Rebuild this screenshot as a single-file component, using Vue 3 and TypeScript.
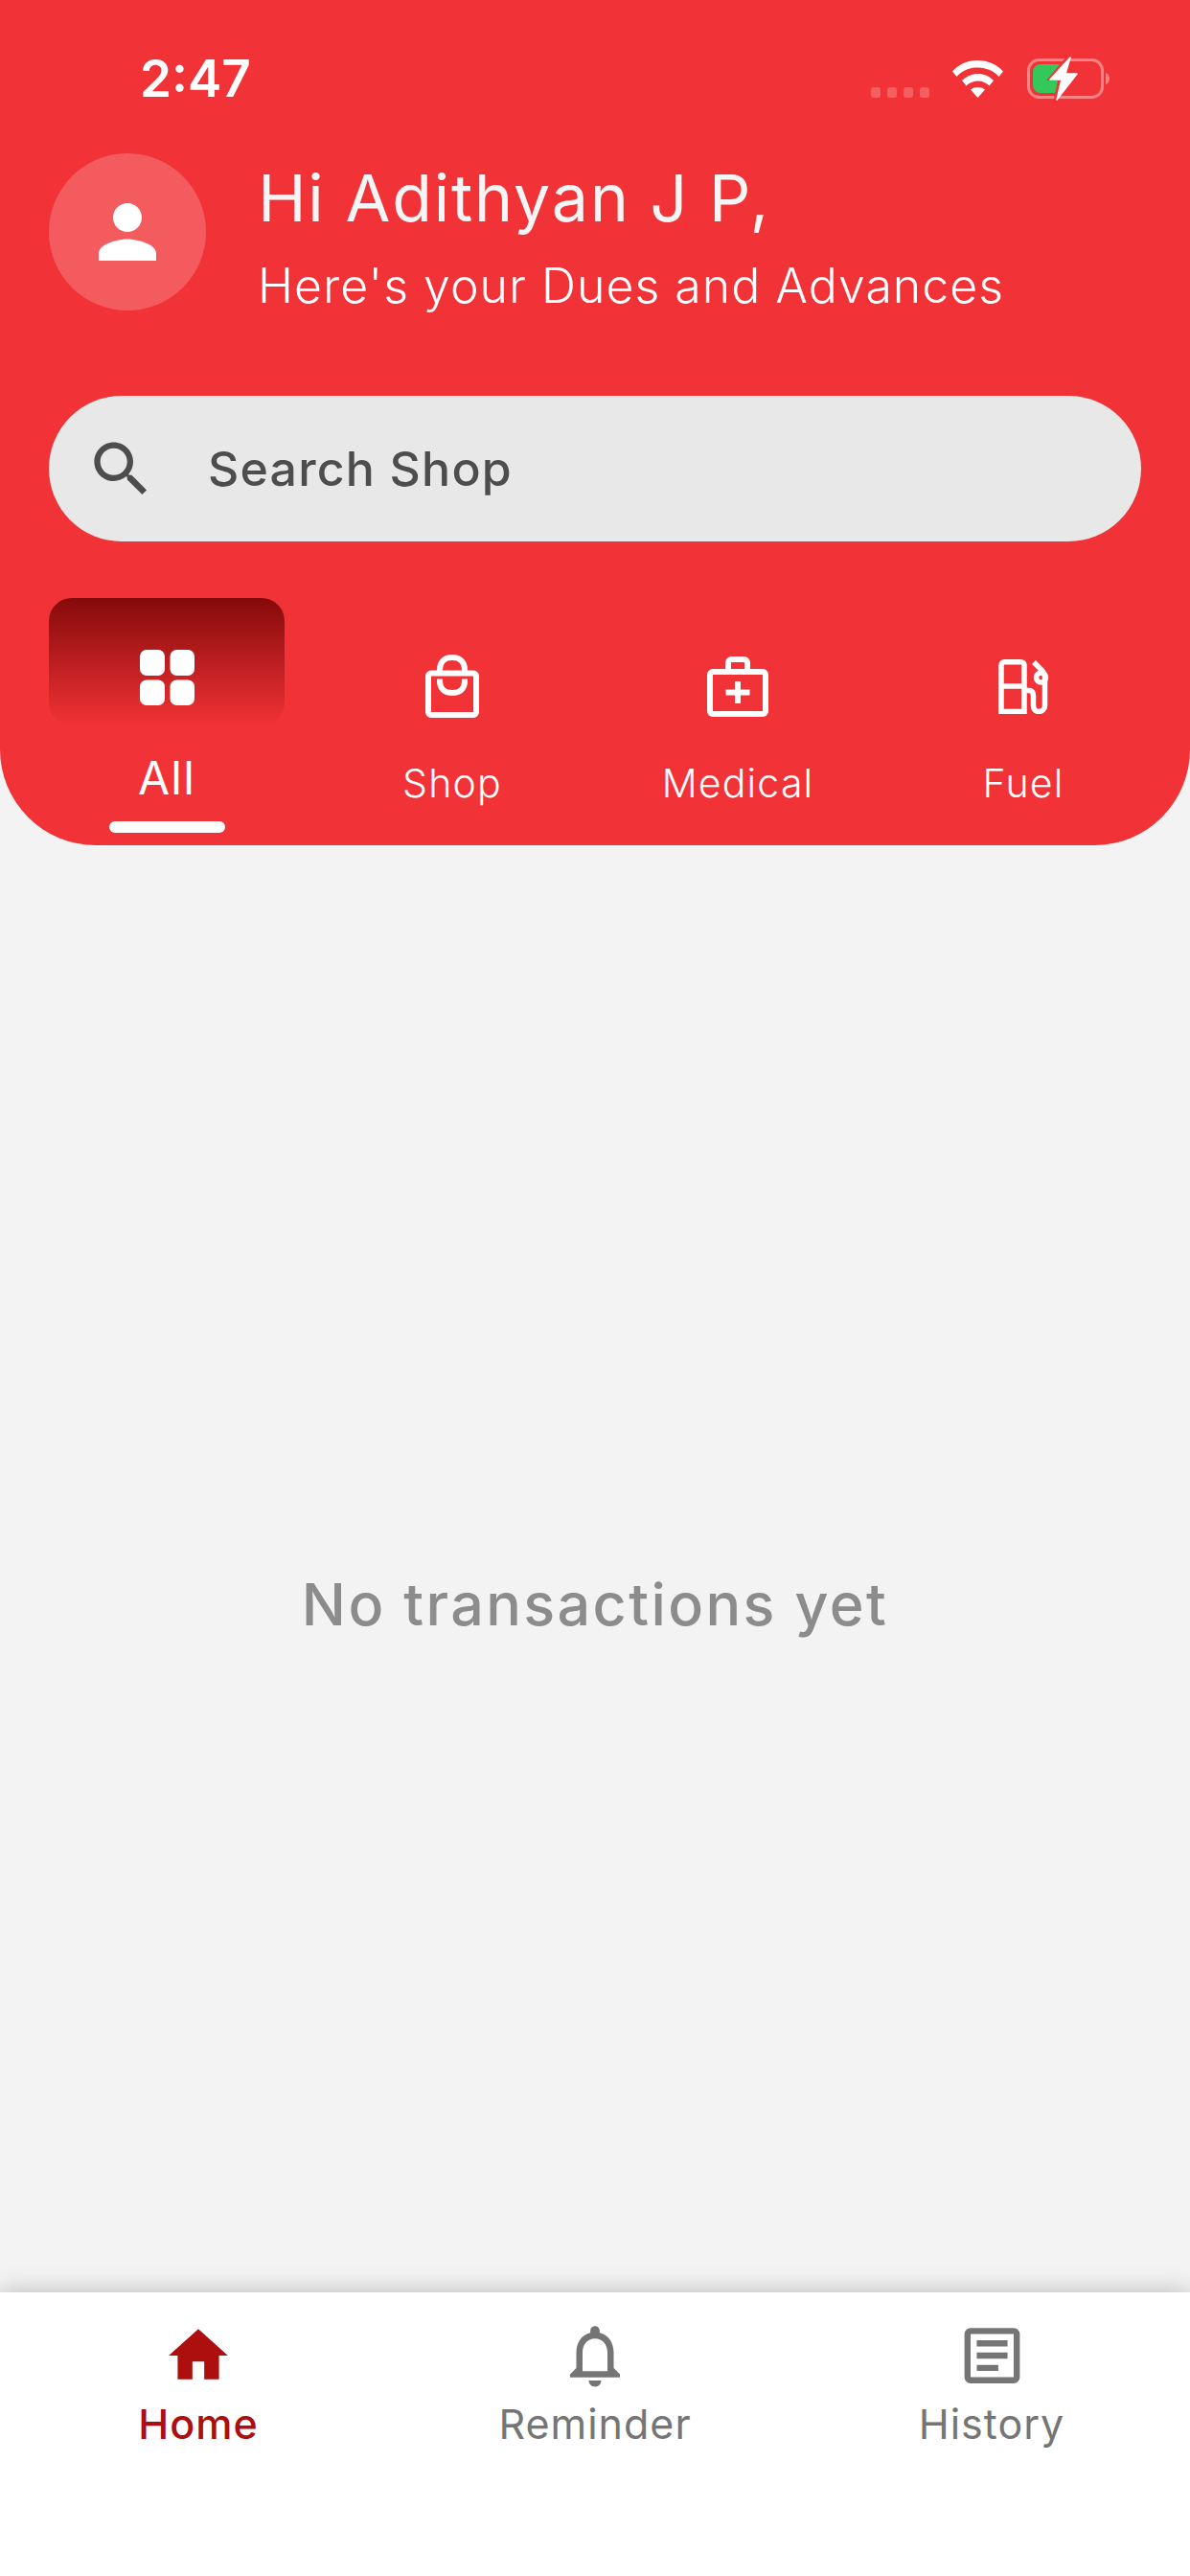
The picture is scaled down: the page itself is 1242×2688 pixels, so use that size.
<template>
  <div class="screen">
    <header class="top">
      <div class="status">
        <span class="time">2:47</span>
        <div class="status-icons">
          <div class="signal"><i /><i /><i /><i /></div>
          <svg class="wifi" viewBox="0 0 53 40">
            <path d="M0 12.5C7 5 16 1 26.500 1S46 5 53 12.500L48.500 18C43 12 35.500 8.500 26.500 8.500S10 12 4.500 18Z" fill="#fff" />
            <path d="M10 22C14.500 17.500 20 15 26.500 15S38.500 17.500 43 22L38.500 27.500C35.500 24.500 31.500 22.500 26.500 22.500S17.500 24.500 14.500 27.500Z" fill="#fff" />
            <path d="M19 31.500C21 29.800 23.500 29 26.500 29S32 29.800 34 31.500L26.500 40Z" fill="#fff" />
          </svg>
          <svg class="battery" viewBox="0 0 90 46">
            <rect x="1.500" y="3.500" width="77" height="39" rx="11" fill="none" stroke="#fff" stroke-opacity=".4" stroke-width="3" />
            <path d="M82 17c2.500.8 4 3 4 6s-1.500 5.200-4 6Z" fill="#fff" fill-opacity=".4" />
            <rect x="6" y="8" width="34" height="30" rx="8" fill="#34c759" />
            <path d="M42-1 20 25h12l-5 24 25-31H39l7-19Z" fill="#f13236" />
            <path d="M45 1 24 24h12l-5 21 21-27H40Z" fill="#fff" stroke="#fff" stroke-width="1.500" stroke-linejoin="round" />
          </svg>
        </div>
      </div>

      <div class="hello">
        <div class="avatar">
          <svg viewBox="0 0 24 24" width="90" height="90">
            <path d="M12 12c2.210 0 4-1.790 4-4s-1.790-4-4-4-4 1.790-4 4 1.790 4 4 4zm0 2c-2.670 0-8 1.340-8 4v2h16v-2c0-2.660-5.330-4-8-4z" fill="#fff" />
          </svg>
        </div>
        <div class="hello-text">
          <h1>Hi Adithyan J P,</h1>
          <p>Here's your Dues and Advances</p>
        </div>
      </div>

      <div class="search">
        <svg viewBox="0 0 24 24" width="75" height="75">
          <path d="M15.500 14h-.79l-.28-.27C15.410 12.590 16 11.110 16 9.500 16 5.910 13.090 3 9.500 3S3 5.910 3 9.500 5.910 16 9.500 16c1.610 0 3.090-.59 4.230-1.570l.27.280v.79l5 4.990L20.490 19l-4.990-5zm-6 0C7.010 14 5 11.990 5 9.500S7.010 5 9.500 5 14 7.010 14 9.500 11.990 14 9.500 14z" fill="#4d4d4d" />
        </svg>
        <span>Search Shop</span>
      </div>

      <nav class="cats">
        <div class="cat cat-active">
          <div class="tile">
            <svg viewBox="0 0 57 58" width="57" height="58" fill="#fff">
              <rect width="26" height="27" rx="7" />
              <rect x="31.500" width="25.500" height="27" rx="7" />
              <rect y="31.500" width="26" height="26.500" rx="7" />
              <rect x="31.500" y="31.500" width="25.500" height="26.500" rx="7" />
            </svg>
          </div>
          <span class="cat-label">All</span>
          <div class="bar" />
        </div>

        <div class="cat">
          <div class="cat-icon">
            <svg viewBox="0 0 56 66" width="56" height="66" fill="none" stroke="#fff" stroke-width="6">
              <rect x="3" y="19.500" width="50" height="43.500" rx="3" stroke-linejoin="round" />
              <path d="M15 19V15.500C15 7.500 20.500 3 28 3S41 7.500 41 15.500V19" />
              <path d="M15 25.500V28C15 36 20.500 40 28 40S41 36 41 28V25.500" />
            </svg>
          </div>
          <span class="cat-label cat-small">Shop</span>
        </div>

        <div class="cat">
          <div class="cat-icon">
            <svg viewBox="0 0 64 63" width="64" height="63" fill="none" stroke="#fff" stroke-width="6">
              <rect x="3" y="16" width="58" height="44" rx="3" />
              <path d="M22 15V6.500C22 4.500 23.500 3 25.500 3H38.500C40.500 3 42 4.500 42 6.500V15" />
              <path d="M32 26V49M19.500 37.500H44.500" />
            </svg>
          </div>
          <span class="cat-label cat-small">Medical</span>
        </div>

        <div class="cat">
          <div class="cat-icon">
            <svg viewBox="0 0 53 57" width="53" height="57" fill="none" stroke="#fff" stroke-width="5.500">
              <path d="M3 54.500V6C3 4 4.500 2.800 6.500 2.800H23.500C25.500 2.800 27 4 27 6V54.500Z" />
              <path d="M3 28H27" />
              <path d="M27 32.500H32C35 32.500 36.500 34.500 36.500 37.500V48C36.500 52 38.500 54.500 42 54.500S48.500 52 48.500 48V18C48.500 15 47.500 14 45.500 11.500L37 3" />
              <circle cx="44.500" cy="19" r="5" />
            </svg>
          </div>
          <span class="cat-label cat-small">Fuel</span>
        </div>
      </nav>
    </header>

    <main class="empty">
      <p>No transactions yet</p>
    </main>

    <footer class="tabs">
      <div class="tab tab-active">
        <svg viewBox="0 0 24 24" width="74" height="74">
          <path d="M10 20v-6h4v6h5v-8h3L12 3 2 12h3v8z" fill="currentColor" />
        </svg>
        <span>Home</span>
      </div>
      <div class="tab">
        <svg viewBox="0 0 24 24" width="78" height="78">
          <path d="M12 22c1.100 0 2-.9 2-2h-4c0 1.100.9 2 2 2zm6-6v-5c0-3.070-1.630-5.640-4.500-6.320V4c0-.83-.67-1.500-1.500-1.500s-1.500.67-1.500 1.500v.68C7.640 5.360 6 7.920 6 11v5l-2 2v1h16v-1l-2-2zm-2 1H8v-6c0-2.480 1.510-4.500 4-4.500s4 2.020 4 4.500v6z" fill="currentColor" />
        </svg>
        <span>Reminder</span>
      </div>
      <div class="tab">
        <svg viewBox="0 0 24 24" width="77" height="77">
          <path d="M19 5v14H5V5h14m0-2H5c-1.100 0-2 .9-2 2v14c0 1.100.9 2 2 2h14c1.100 0 2-.9 2-2V5c0-1.100-.9-2-2-2zM14 17H7v-2h7v2zm3-4H7v-2h10v2zm0-4H7V7h10v2z" fill="currentColor" />
        </svg>
        <span>History</span>
      </div>
    </footer>
  </div>
</template>

<script setup lang="ts">
</script>

<style>
html,
body {
  margin: 0;
  background: #f3f3f3;
}
</style>

<style scoped>
.screen {
  width: 1242px;
  height: 2688px;
  display: flex;
  flex-direction: column;
  overflow: hidden;
  background: #f3f3f3;
  font-family: Inter, Roboto, sans-serif;
}

.top {
  height: 882px;
  box-sizing: border-box;
  flex: none;
  background: #f13236;
  border-radius: 0 0 100px 100px;
  color: #fff;
}

.status {
  height: 160px;
  box-sizing: border-box;
  padding: 50px 80px 0 146px;
  display: flex;
  justify-content: space-between;
  align-items: flex-start;
}

.time {
  font-size: 53px;
  font-weight: 600;
  line-height: 64px;
}

.status-icons {
  display: flex;
  align-items: flex-start;
  padding-top: 10px;
}

.signal {
  display: flex;
  gap: 7px;
  margin-top: 31px;
  margin-right: 24px;
}

.signal i {
  width: 10px;
  height: 11px;
  border-radius: 3px;
  background: rgba(255, 255, 255, 0.22);
}

.wifi {
  width: 53px;
  height: 40px;
  margin-top: 2px;
  margin-right: 25px;
}

.battery {
  width: 90px;
  height: 46px;
  margin-top: -1px;
  overflow: visible;
}

.hello {
  display: flex;
  align-items: flex-start;
  padding-left: 51px;
  gap: 54px;
}

.avatar {
  width: 164px;
  height: 164px;
  border-radius: 50%;
  background: rgba(255, 255, 255, 0.2);
  display: flex;
  align-items: center;
  justify-content: center;
}

.hello-text h1 {
  margin: 6px 0 0;
  font-size: 68px;
  font-weight: 400;
  line-height: 80px;
  letter-spacing: 1.800px;
  color: #f5f5f5;
}

.hello-text p {
  margin: 22px 0 0;
  font-size: 50px;
  font-weight: 300;
  line-height: 60px;
  letter-spacing: 1px;
  color: #fff;
}

.search {
  margin: 85px 51px 0;
  height: 152px;
  border-radius: 76px;
  background: #e8e8e8;
  display: flex;
  align-items: center;
  padding-left: 38px;
  gap: 53px;
  color: #4d4d4d;
  font-size: 50px;
  font-weight: 450;
  letter-spacing: 1.200px;
}

.cats {
  display: grid;
  grid-template-columns: repeat(4, 1fr);
  padding: 0 25px;
  margin-top: 59px;
}

.cat {
  display: flex;
  flex-direction: column;
  align-items: center;
}

.tile {
  width: 246px;
  height: 133px;
  border-radius: 24px;
  background: linear-gradient(#850a0a, rgba(241, 50, 54, 0));
  display: flex;
  justify-content: center;
  padding-top: 54px;
  box-sizing: border-box;
}

.cat-icon {
  height: 66px;
  margin-top: 59px;
  display: flex;
  align-items: center;
}

.cat-label {
  margin-top: 28px;
  font-size: 48px;
  font-weight: 400;
  line-height: 54px;
  letter-spacing: 1.200px;
}

.cat-small {
  margin-top: 44px;
  font-size: 41px;
  font-weight: 300;
  line-height: 48px;
}

.bar {
  width: 121px;
  height: 12px;
  border-radius: 6px;
  background: #fff;
  margin-top: 18px;
}

.empty {
  flex: 1;
  display: flex;
  align-items: center;
  justify-content: center;
}

.empty p {
  margin: 0;
  padding-top: 74px;
  font-size: 61px;
  font-weight: 450;
  letter-spacing: 2.400px;
  color: #8c8c8c;
}

.tabs {
  flex: none;
  height: 296px;
  box-sizing: border-box;
  padding-top: 27px;
  background: #fff;
  box-shadow: 0 0 24px rgba(0, 0, 0, 0.25);
  display: grid;
  grid-template-columns: repeat(3, 1fr);
  align-items: start;
}

.tab {
  display: flex;
  flex-direction: column;
  align-items: center;
  color: #757575;
}

.tab svg {
  height: 78px;
}

.tab span {
  margin-top: 6px;
  font-size: 43px;
  line-height: 52px;
  letter-spacing: 1px;
}

.tab-active {
  color: #ad0e0e;
}

.tab-active span {
  font-weight: 500;
}
</style>
